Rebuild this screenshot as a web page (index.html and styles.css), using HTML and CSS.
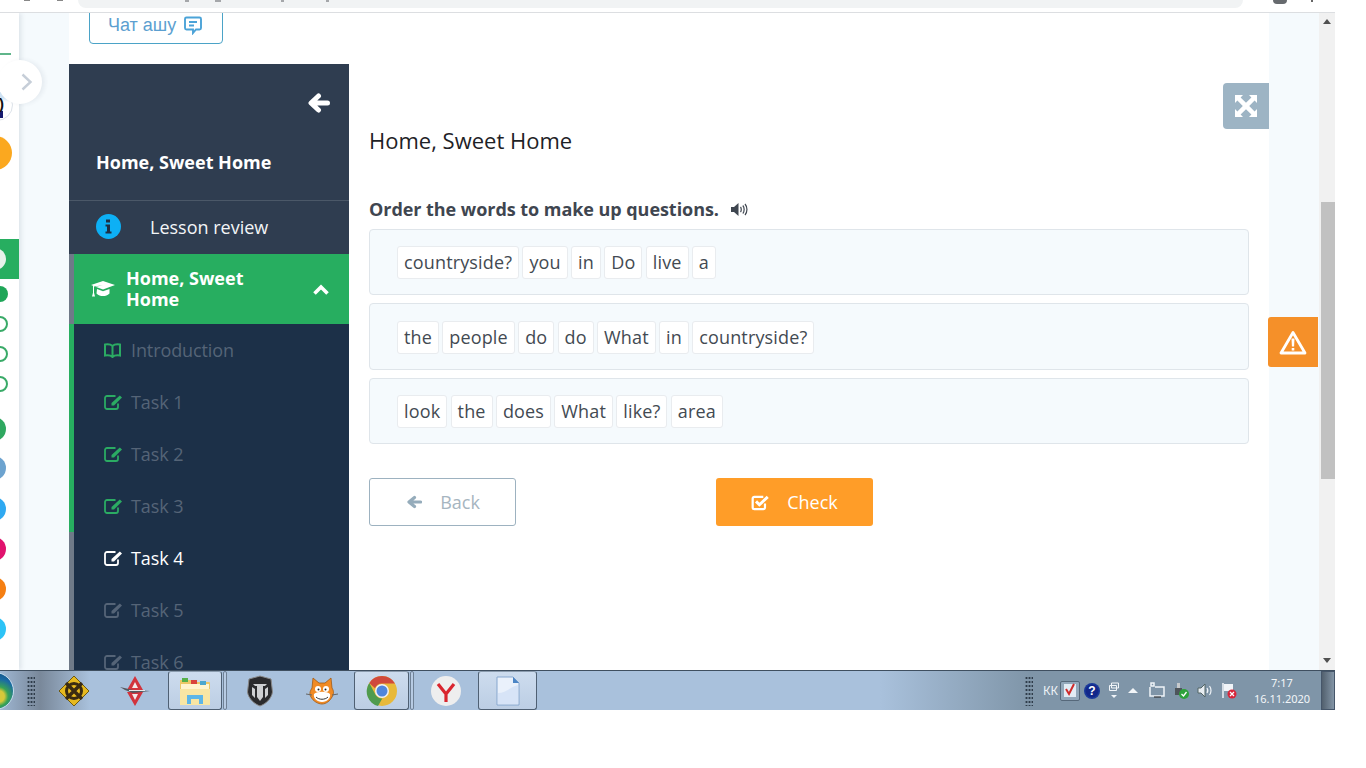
FILE: index.html
```html
<!DOCTYPE html>
<html lang="kk">
<head>
<meta charset="utf-8">
<title>Home, Sweet Home</title>
<link rel="stylesheet" href="styles.css">
</head>
<body>
<div class="screen">
  <header class="browser-bar">
    <div class="nav-glyphs"><span class="nav-dot"></span><span class="nav-dot"></span></div>
    <div class="omnibox"><span class="crumb crumb-a"></span><span class="crumb crumb-b"></span><span class="crumb crumb-c"></span><span class="crumb crumb-d"></span></div>
    <div class="profile"><span class="avatar-chip"></span><span class="menu-chip"></span></div>
  </header>

  <div class="viewport">
    <aside class="rail">
      <span class="rail-line"></span>
      <span class="rail-face"><span class="face-mark">)</span></span>
      <span class="rail-sun"></span>
      <span class="rail-current"><span class="rail-current-dot"></span></span>
      <span class="step step-full"></span>
      <span class="step step-ring"></span>
      <span class="step step-ring"></span>
      <span class="step step-ring"></span>
      <span class="badge badge-green"></span>
      <span class="badge badge-steel"></span>
      <span class="badge badge-blue"></span>
      <span class="badge badge-pink"></span>
      <span class="badge badge-orange"></span>
      <span class="badge badge-cyan"></span>
    </aside>
    <button class="rail-toggle" aria-label="Open">
      <svg width="14" height="20" viewBox="0 0 14 20"><path d="M2.5 2.500 10.500 10l-8 7.500" fill="none" stroke="#c6ced8" stroke-width="2.400"/></svg>
    </button>

    <main class="page">
      <div class="chat-row">
        <a class="chat-btn">Чат ашу
          <svg width="20" height="20" viewBox="0 0 20 20"><path d="M3.500 2.500h13a1.500 1.500 0 0 1 1.500 1.500v9a1.500 1.500 0 0 1-1.500 1.500h-3.500l-3 3.500v-3.500h-6.500A1.500 1.500 0 0 1 2 13V4a1.500 1.500 0 0 1 1.500-1.500z" fill="none" stroke="#4ba3d8" stroke-width="1.900"/><path d="M6 7h8M6 10.500h5" stroke="#4ba3d8" stroke-width="1.900"/></svg>
        </a>
      </div>

      <div class="lesson">
        <nav class="sidebar">
          <div class="side-head">
            <svg class="back-arrow" width="23" height="20" viewBox="0 0 23 20"><path d="M20.500 10H5M11.500 3 4 10l7.500 7" fill="none" stroke="#fff" stroke-width="5" stroke-linecap="round" stroke-linejoin="round"/></svg>
            <div class="side-title">Home, Sweet Home</div>
          </div>
          <div class="review-row">
            <svg width="25" height="25" viewBox="0 0 25 25"><circle cx="12.500" cy="12.500" r="12.500" fill="#0db0f5"/><path d="M10 5.500h4v3h-4zM9.500 10.500h4.500v7h1.500v2h-6v-2H11v-5H9.500z" fill="#1d2f45"/></svg>
            <span>Lesson review</span>
          </div>
          <div class="tree">
            <div class="topic-row">
              <svg width="24" height="18" viewBox="0 0 24 18"><path d="M12 1 24 5 12 9.500 4.500 6.800 12 5.200 3 6.500v6.300l1 3.700H1l1-3.700V5.800L0 5zM6 9l6 2.200L18.500 9v4.500c-2 2-4 2.500-6.500 2.500s-4.500-.5-6.500-2.500z" fill="#fff"/></svg>
              <span class="topic-name">Home, Sweet Home</span>
              <svg class="topic-chev" width="18" height="12" viewBox="0 0 18 12"><path d="m2.500 9.500 6.500-6.500 6.500 6.500" fill="none" stroke="#fff" stroke-width="3.600"/></svg>
            </div>
            <ul class="task-list">
              <li class="task done"><svg class="task-icon" width="17" height="15" viewBox="0 0 17 15"><path d="M8.500 3C7 1.500 4 1 1 1.500v11c3-.5 6 0 7.500 1.500 1.500-1.500 4.500-2 7.500-1.500v-11C13 1 10 1.500 8.500 3zm0 0v11" fill="none" stroke="currentColor" stroke-width="2"/></svg>Introduction</li>
              <li class="task done"><svg class="task-icon" width="19" height="16" viewBox="0 0 19 16"><use href="#edit"/></svg>Task 1</li>
              <li class="task done"><svg class="task-icon" width="19" height="16" viewBox="0 0 19 16"><use href="#edit"/></svg>Task 2</li>
              <li class="task done"><svg class="task-icon" width="19" height="16" viewBox="0 0 19 16"><use href="#edit"/></svg>Task 3</li>
              <li class="task current"><svg class="task-icon" width="19" height="16" viewBox="0 0 19 16"><use href="#edit"/></svg>Task 4</li>
              <li class="task locked"><svg class="task-icon" width="19" height="16" viewBox="0 0 19 16"><use href="#edit"/></svg>Task 5</li>
              <li class="task locked"><svg class="task-icon" width="19" height="16" viewBox="0 0 19 16"><use href="#edit"/></svg>Task 6</li>
            </ul>
          </div>
        </nav>

        <section class="content">
          <h1 class="lesson-title">Home, Sweet Home</h1>
          <p class="instruction">Order the words to make up questions.
            <svg width="19" height="15" viewBox="0 0 19 15"><path d="M1 5h3l4.500-4v13L4 10H1z" fill="#3f4650"/><path d="M10.500 5c1 1.200 1 3.800 0 5M12.800 3.500c1.800 2 1.800 6 0 8M15 2c2.600 3 2.600 8 0 11" fill="none" stroke="#3f4650" stroke-width="1.200"/></svg>
          </p>
          <div class="word-row tall-a"><span class="chip">countryside?</span><span class="chip">you</span><span class="chip">in</span><span class="chip">Do</span><span class="chip">live</span><span class="chip">a</span></div>
          <div class="word-row tall-b"><span class="chip">the</span><span class="chip">people</span><span class="chip">do</span><span class="chip">do</span><span class="chip">What</span><span class="chip">in</span><span class="chip">countryside?</span></div>
          <div class="word-row tall-a"><span class="chip">look</span><span class="chip">the</span><span class="chip">does</span><span class="chip">What</span><span class="chip">like?</span><span class="chip">area</span></div>
          <div class="actions">
            <button class="btn btn-back">
              <svg width="16" height="14" viewBox="0 0 16 14"><path d="M14.500 7H4M8.500 2.500 3 7l5.500 4.500" fill="none" stroke="#95acbb" stroke-width="3.200" stroke-linecap="round" stroke-linejoin="round"/></svg>
              Back
            </button>
            <button class="btn btn-check">
              <svg width="19" height="17" viewBox="0 0 17 15"><path d="M12.500 8.500V12a1.500 1.500 0 0 1-1.500 1.500H3A1.500 1.500 0 0 1 1.500 12V4A1.500 1.500 0 0 1 3 2.500h8" fill="none" stroke="#fff" stroke-width="2"/><path d="m4.500 6.500 3 3L15 2.500" fill="none" stroke="#fff" stroke-width="2.600"/></svg>
              Check
            </button>
          </div>
          <button class="expand" aria-label="Fullscreen">
            <svg width="22" height="22" viewBox="0 0 22 22"><path d="M0 0h8L5.600 2.400 11 7.800l5.400-5.400L14 0h8v8l-2.400-2.400L14.200 11l5.400 5.400L22 14v8h-8l2.400-2.400L11 14.200l-5.400 5.400L8 22H0v-8l2.400 2.400L7.800 11 2.400 5.600 0 8z" fill="#fff"/></svg>
          </button>
        </section>
      </div>
    </main>

    <div class="side-gutter"></div>
    <button class="warn-tab" aria-label="Report">
      <svg width="28" height="25" viewBox="0 0 28 25"><path d="M14 2.500 26 23H2z" fill="none" stroke="#fff" stroke-width="2.800" stroke-linejoin="round"/><path d="M12.500 8.500h3l-.4 8h-2.200zM12.700 18h2.600v2.400h-2.600z" fill="#fff"/></svg>
    </button>
    <div class="scrollbar">
      <span class="scroll-up"></span>
      <span class="scroll-thumb"></span>
      <span class="scroll-down"></span>
    </div>
  </div>

  <footer class="taskbar">
    <span class="start-orb"></span>
    <span class="grip"></span>
    <span class="tb-app tb-tank">
      <svg width="32" height="32" viewBox="0 0 32 32"><path d="M16 1 31 16 16 31 1 16z" fill="#e6b91f" stroke="#6e5a10"/><circle cx="16" cy="16" r="7.500" fill="none" stroke="#3a2b12" stroke-width="3"/><path d="m8 8 16 16M24 8 8 24" stroke="#3a2b12" stroke-width="3.500"/></svg>
    </span>
    <span class="tb-app tb-plane">
      <svg width="32" height="32" viewBox="0 0 32 32"><path d="M16 1 24 15H8zM16 31 24 17H8z" fill="#d2333c"/><path d="M16 7 19 13h-6zM16 25l3-6h-6z" fill="#f3e9e9"/><path d="M1 12 14 15 31 16 14 18 6 15z" fill="#55585e"/><path d="M10 15.500h16" stroke="#e8e8e8"/></svg>
    </span>
    <span class="tb-slot tb-slot-folder">
      <svg width="34" height="32" viewBox="0 0 34 32"><path d="M2 5h12l2 2h15a1 1 0 0 1 1 1v21a1 1 0 0 1-1 1H2z" fill="#ecc868"/><path d="M3 9h28v6H3z" fill="#fff4cf"/><path d="M4 3h6v4H4z" fill="#55b04a"/><path d="M13 5h6v4h-6z" fill="#d9433c"/><path d="M22 6h6v4h-6z" fill="#4ca7cf"/><path d="M2 14h30v16H2z" fill="#f8e6a4"/><path d="M9 20h16v9h-4v-5h-8v5H9z" fill="#5db6e8"/></svg>
    </span>
    <span class="tb-sep"></span>
    <span class="tb-app tb-wot">
      <svg width="26" height="32" viewBox="0 0 26 32"><path d="M13 1 24 4l1.500 13c-1 7-7 12-12.500 14C7.500 29 1.500 24 .5 17L2 4z" fill="#2b2b2d" stroke="#8a8a8a"/><path d="M6 9h14l-2 2h-2v11l-3 4-3-4V11H8zM5 12v8l3 3v-9zM21 12v8l-3 3v-9z" fill="#cfd0d2"/></svg>
    </span>
    <span class="tb-app tb-cat">
      <svg width="32" height="28" viewBox="0 0 32 28"><path d="M7 1l6 5h6l6-5 1 10c2 3 2 6 0 9-2 4-6 7-10 7s-9-3-11-7c-2-3-1-6 1-9z" fill="#f08a24" stroke="#a35a12" stroke-width=".8"/><path d="M8 17c3-3 13-3 16 0 1 4-3 8-8 8s-9-4-8-8z" fill="#fff"/><circle cx="12" cy="12" r="3" fill="#fff"/><circle cx="20" cy="12" r="3" fill="#fff"/><circle cx="12.500" cy="12.500" r="1" fill="#222"/><circle cx="19.500" cy="12.500" r="1" fill="#222"/><path d="M10 20c3 3 9 3 12 0" fill="none" stroke="#333"/><path d="M0 17l6 1M26 18l6-1" stroke="#666"/></svg>
    </span>
    <span class="tb-slot tb-slot-chrome">
      <svg width="32" height="32" viewBox="0 0 32 32"><circle cx="16" cy="16" r="15" fill="#e8b93a"/><path d="M16 1a15 15 0 0 1 13 7.500H16a7.500 7.500 0 0 0-7 4.700L3.300 8A15 15 0 0 1 16 1z" fill="#d0493c"/><path d="M3.300 8 9.500 19.800a7.500 7.500 0 0 0 6.800 3.700L12 31A15 15 0 0 1 3.300 8z" fill="#4f9b4d"/><circle cx="16" cy="16" r="7" fill="#f2f2f2"/><circle cx="16" cy="16" r="5.500" fill="#4f86dc"/></svg>
    </span>
    <span class="tb-sep"></span>
    <span class="tb-app tb-yandex">
      <svg width="30" height="30" viewBox="0 0 30 30"><circle cx="15" cy="15" r="15" fill="#eeeeee"/><path d="M7 8l8 10 8-10M15 17v9" fill="none" stroke="#d9252e" stroke-width="3.200"/></svg>
    </span>
    <span class="tb-slot tb-slot-doc">
      <svg width="26" height="30" viewBox="0 0 26 30"><path d="M2 1h16l6 6v22H2z" fill="#eaf1fb" stroke="#86a7cf"/><path d="M18 1v6h6z" fill="#4c86c6"/><path d="M3 3v25h20V9c-6 1-12 8-20 8z" fill="#d7e4f7"/></svg>
    </span>
    <span class="tb-fill"></span>
    <span class="grip grip-tray"></span>
    <span class="tray">
      <span class="tray-lang">КК</span>
      <span class="tray-check">
        <svg width="14" height="15" viewBox="0 0 14 15"><path d="M1 1h12v13H1z" fill="#e3ecf5"/><path d="m3 6 3 5 5-10" fill="none" stroke="#cf2b2b" stroke-width="2"/></svg>
      </span>
      <svg width="16" height="16" viewBox="0 0 16 16"><circle cx="8" cy="8" r="8" fill="#1a3a9a"/><circle cx="8" cy="8" r="6.500" fill="#12278a"/><text class="tray-q" x="8" y="12">?</text></svg>
      <svg width="12" height="18" viewBox="0 0 12 18"><path d="M3.500 1h7v5h-7zM1.500 3.500h7v5h-7z" fill="none" stroke="#f0f4f8"/><path d="m3 13 3 3 3-3z" fill="#f0f4f8"/></svg>
      <svg class="tray-up" width="12" height="8" viewBox="0 0 12 8"><path d="M6 1 11 6H1z" fill="#f2f5f8"/></svg>
      <svg width="16" height="17" viewBox="0 0 16 17"><path d="M2 1h3v3H2zM1 5v9h14V5H6" fill="none" stroke="#f0f4f8" stroke-width="1.500"/><path d="M5 15h7" stroke="#222"/></svg>
      <svg width="16" height="17" viewBox="0 0 16 17"><path d="M2 6h7v7H2z" fill="#4e555b"/><path d="M4 1h3v5H4z" fill="#c6c9cc"/><circle cx="11" cy="12" r="5" fill="#2ea23a"/><path d="m8.500 12 2 2 3-4" fill="none" stroke="#fff" stroke-width="1.300"/></svg>
      <svg width="16" height="15" viewBox="0 0 16 15"><path d="M1 5h3l4-4v13l-4-4H1z" fill="#e8edf2" stroke="#566"/><path d="M10 5c1 1.500 1 3.500 0 5M12.500 3c2 2.500 2 6.500 0 9" fill="none" stroke="#f0f4f8" stroke-width="1.200"/></svg>
      <svg width="16" height="17" viewBox="0 0 16 17"><path d="M2 1v15" stroke="#f0f4f8" stroke-width="1.500"/><path d="M3 2h9v7H3z" fill="#f0f4f8"/><circle cx="11" cy="12" r="4.500" fill="#d9253a"/><path d="m9 10 4 4m0-4-4 4" stroke="#fff" stroke-width="1.200"/></svg>
    </span>
    <span class="clock"><span>7:17</span><span>16.11.2020</span></span>
    <span class="show-desktop"></span>
  </footer>
</div>
<svg class="defs" width="0" height="0" aria-hidden="true"><defs>
  <g id="edit"><path d="M14 9.500V13a2 2 0 0 1-2 2H3a2 2 0 0 1-2-2V4a2 2 0 0 1 2-2h8.500" fill="none" stroke="currentColor" stroke-width="1.800"/><path d="M15.800 1.500 18 3.500 10 11.500H7.500V9z" fill="currentColor"/></g>
</defs></svg>
</body>
</html>
```

FILE: styles.css
```css
* { box-sizing: border-box; }
html, body { margin: 0; height: 100%; background: #fff; overflow: hidden; }
body { font-family: "Open Sans", "Noto Sans", sans-serif; color: #3f4650; }
button { font-family: inherit; border: 0; padding: 0; }
.defs { display: block; height: 0; }
.screen { width: 1335px; height: 710px; display: flex; flex-direction: column; }

/* browser chrome remnant */
.browser-bar { height: 13px; flex: none; background: #fff; border-bottom: 1px solid #dcdee1; display: flex; align-items: flex-start; }
.nav-glyphs { width: 78px; display: flex; gap: 27px; padding: 0 0 0 24px; flex: none; }
.nav-dot { width: 6px; height: 1px; background: #888; }
.omnibox { width: 1165px; height: 8px; background: #f1f3f4; border-radius: 0 0 14px 14px; display: flex; flex: none; padding-left: 107px; }
.crumb { height: 2px; width: 4px; background: #a5a7aa; }
.crumb-b { margin-left: 26px; width: 6px; }
.crumb-c { margin-left: 60px; width: 3px; }
.crumb-d { margin-left: 42px; width: 3px; }
.profile { flex: 1; display: flex; padding-left: 30px; gap: 24px; }
.avatar-chip { width: 14px; height: 4px; background: #666a6e; border-radius: 0 0 7px 7px; }
.menu-chip { width: 2px; height: 2px; background: #666; }

.viewport { height: 657px; flex: none; display: flex; position: relative; overflow: hidden; background: #f5fafd; }

/* left rail */
.rail { width: 19px; flex: none; background: #fff; box-shadow: 2px 0 5px rgba(40, 60, 80, .12); display: flex; flex-direction: column; align-items: flex-start; overflow: hidden; z-index: 1; }
.rail-line { width: 11px; height: 2px; background: #5fb58a; margin-top: 40px; flex: none; }
.rail-face { width: 32px; height: 32px; border-radius: 50%; margin: 34px 0 0 -19px; border: 1px solid #dde3ea; background: linear-gradient(90deg, #161a6e 21px, #fff 21px) 0 21px / 100% 7px no-repeat, linear-gradient(#cfe2f3 25%, #fff 40%); flex: none; text-align: left; font: 700 15px/24px "Liberation Sans", sans-serif; color: #111; padding: 2px 0 0 17px; }
.face-mark { display: block; }
.rail-sun { width: 34px; height: 34px; border-radius: 50%; background: #fba81f; margin: 15px 0 0 -22px; flex: none; }
.rail-current { width: 19px; height: 40px; background: #27ae60; margin-top: 69px; flex: none; display: flex; align-items: center; }
.rail-current-dot { width: 22px; height: 22px; border-radius: 50%; margin-left: -16px; background: #e7f2ea; flex: none; }
.step { width: 16px; height: 16px; border-radius: 50%; margin: 14px 0 0 -8px; flex: none; }
.step-full { background: #1fa658; margin-top: 7px; }
.step-ring { border: 2px solid #3aaa68; background: #fff; }
.badge { width: 24px; height: 24px; border-radius: 50%; margin: 16px 0 0 -18px; flex: none; }
.badge-green { background: #2fa860; margin-top: 25px; }
.badge-steel { background: #6da3cf; margin-top: 15px; }
.badge-blue { background: #2fa9f1; margin-top: 17px; }
.badge-pink { background: #e1126e; }
.badge-orange { background: #f57f12; }
.badge-cyan { background: #2dc3f6; }
.rail-toggle { position: absolute; left: -2px; top: 47px; width: 44px; height: 44px; border-radius: 50%; background: #fff; box-shadow: 3px 0 4px rgba(40, 60, 80, .07); display: flex; align-items: center; justify-content: center; padding-left: 14px; z-index: 2; }

/* page card */
.page { width: 1200px; margin-left: 50px; flex: none; background: #fff; display: flex; flex-direction: column; }
.chat-row { height: 51px; flex: none; padding-left: 20px; }
.chat-btn { display: flex; align-items: center; gap: 7px; width: 134px; height: 38px; margin-top: -7px; padding-left: 18px; border: 1px solid #4ba3c7; border-radius: 4px; color: #5c9fd0; font: 18px/1 "Liberation Sans", sans-serif; }
.lesson { flex: 1; display: flex; min-height: 0; }

/* sidebar */
.sidebar { width: 280px; flex: none; background: #2f3d50; display: flex; flex-direction: column; overflow: hidden; }
.side-head { height: 137px; flex: none; padding: 29px 19px 0 27px; border-bottom: 1px solid #4b5868; display: flex; flex-direction: column; }
.back-arrow { align-self: flex-end; flex: none; }
.side-title { margin-top: 36px; color: #fff; font-weight: 700; font-size: 18px; line-height: 26px; }
.review-row { height: 53px; flex: none; display: flex; align-items: center; padding: 0 0 2px 27px; gap: 29px; color: #f3f5f7; font-size: 18px; }
.tree { flex: 1; border-left: 5px solid #6f7a88; background: #1c3048; min-height: 0; position: relative; }
.topic-row { height: 70px; background: #27ae60; color: #fff; display: flex; align-items: center; padding: 0 19px 0 17px; gap: 11px; font-weight: 700; font-size: 18px; line-height: 21px; }
.topic-name { width: 165px; flex: none; }
.topic-chev { margin: 2px 0 0 auto; }
.task-list { list-style: none; margin: 0; padding: 0; }
.task { height: 52px; display: flex; align-items: center; padding-left: 30px; gap: 8px; font-size: 18px; letter-spacing: -.1px; color: #556477; }
.task:first-child { gap: 10px; }
.task-icon { flex: none; color: #2bab63; }
.task.current { color: #fff; }
.task.current .task-icon { color: #fff; }
.task.locked .task-icon { color: #556477; }
.tree::before { content: ""; position: absolute; left: -5px; top: 70px; width: 5px; height: 208px; background: #27ae60; }

/* content */
.content { flex: 1; position: relative; padding: 61px 20px 0 20px; min-width: 0; }
.lesson-title { margin: 0; font-weight: 400; font-size: 22px; line-height: 30px; color: #1e2226; }
.instruction { margin: 42px 0 8px; height: 24px; display: flex; align-items: center; gap: 11px; font-weight: 700; font-size: 18px; letter-spacing: -.05px; color: #3f4650; }
.word-row { background: #f5fafd; border: 1px solid #dfe5ea; border-radius: 4px; padding: 16px 27px 0; display: flex; gap: 3.300px; margin-bottom: 8px; }
.tall-a { height: 66px; }
.tall-b { height: 67px; padding-top: 17px; }
.chip { height: 33px; padding: 0 6px; background: #fff; border: 1px solid #e9ecef; border-radius: 3px; font-size: 18px; line-height: 31px; color: #434a52; letter-spacing: .15px; }
.actions { display: flex; margin-top: 34px; }
.btn { height: 48px; font-size: 18px; border-radius: 3px; display: flex; align-items: center; justify-content: center; gap: 18px; }
.btn-back { width: 147px; background: #fff; border: 1px solid #9db2c0; color: #a6b5c0; padding-left: 1px; }
.btn-check { width: 157px; margin-left: 200px; background: #ff9d28; color: #fff; gap: 17px; }
.expand { position: absolute; right: 0; top: 19px; width: 46px; height: 46px; background: #9db4c4; border-radius: 4px 0 0 4px; display: flex; align-items: center; justify-content: center; }

.side-gutter { width: 50px; flex: none; }
.warn-tab { position: absolute; left: 1268px; top: 304px; width: 50px; height: 50px; background: #f59029; border-radius: 3px 0 0 3px; display: flex; align-items: center; justify-content: center; }

/* scrollbar */
.scrollbar { width: 16px; flex: none; background: #f1f1f1; display: flex; flex-direction: column; align-items: center; }
.scroll-up { flex: none; margin-top: 6px; width: 0; height: 0; border: 4px solid transparent; border-top: 0; border-bottom: 5px solid #505050; }
.scroll-thumb { flex: none; width: 14px; height: 277px; margin-top: 178px; margin-left: 1px; background: #c1c1c1; }
.scroll-down { flex: none; margin-top: 179px; width: 0; height: 0; border: 4px solid transparent; border-bottom: 0; border-top: 5px solid #505050; }

/* taskbar */
.taskbar { height: 40px; flex: none; display: flex; align-items: center; border-top: 1px solid #3f4f60; background: linear-gradient(90deg, #9fb7d3 0, #79889a 40px, #a9c1dc 90px, #a9c1dc 880px, #7f95a8 1030px, #7f95a8 100%); color: #f2f5f8; position: relative; overflow: hidden; }
.start-orb { width: 38px; height: 38px; border-radius: 50%; margin-left: -24px; flex: none; background: radial-gradient(circle at 60% 65%, #d7c83a 0 18%, #38a354 30%, #1a6aa5 55%, #0f3d60 100%); border: 1px solid #c7dcec; }
.grip { width: 8px; height: 30px; margin-left: 13px; flex: none; background-image: radial-gradient(circle, #2f3c4a 1px, transparent 1.200px); background-size: 3px 4px; }
.tb-app { flex: none; display: flex; align-items: center; justify-content: center; height: 38px; }
.tb-tank { width: 32px; margin-left: 23px; }
.tb-plane { width: 32px; margin-left: 29px; }
.tb-slot { flex: none; height: 39px; display: flex; align-items: center; justify-content: center; background: linear-gradient(#cddcee, #bccee4); border: 1px solid #4f6073; border-top-color: #8b9cae; border-radius: 3px; }
.tb-slot-folder { width: 54px; margin-left: 17px; }
.tb-sep { flex: none; width: 4px; height: 39px; margin-left: 1px; border: 1px solid #6f8195; border-radius: 2px; background: #b7cbe3; }
.tb-wot { width: 26px; margin-left: 20px; }
.tb-cat { width: 32px; margin-left: 33px; }
.tb-slot-chrome { width: 55px; margin-left: 16px; }
.tb-yandex { width: 30px; margin-left: 17px; }
.tb-slot-doc { width: 59px; margin-left: 17px; }
.tb-fill { flex: 1; }
.grip-tray { margin-left: 0; }
.tray { flex: none; display: flex; align-items: center; gap: 8px; margin-left: 10px; }
.tray-lang { font: 12px "Noto Sans", sans-serif; color: #eef2f6; width: 14px; margin-right: -5px; }
.tray-check { width: 20px; height: 20px; flex: none; border: 1px solid #56687a; border-radius: 2px; background: #93a8bb; display: flex; align-items: center; justify-content: center; margin-right: -4px; }
.tray-q { font: 700 12px "Liberation Sans", sans-serif; fill: #fff; text-anchor: middle; }
.tray-up { margin: 0 2px 0 -1px; }
.clock { flex: none; display: flex; flex-direction: column; align-items: center; width: 58px; margin-left: 16px; font: 11px/16px "Noto Sans", sans-serif; color: #f2f5f8; }
.show-desktop { flex: none; width: 14px; height: 39px; margin-left: 10px; border: 1px solid #46566a; background: linear-gradient(90deg, #52606e, #8395a6); }
```
